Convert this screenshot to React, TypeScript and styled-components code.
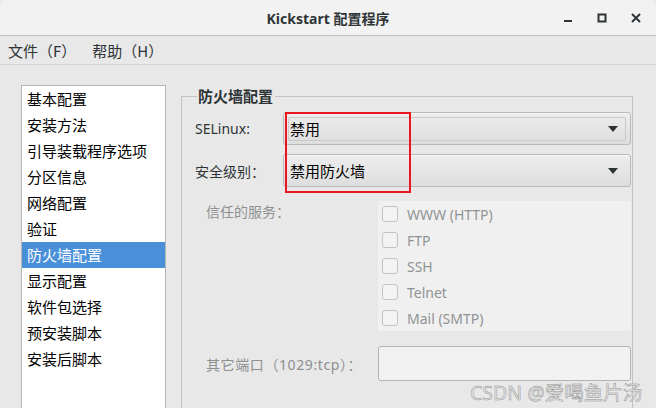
import React, { useState } from 'react';
import styled, { createGlobalStyle } from 'styled-components';

const GlobalStyle = createGlobalStyle`
  html, body {
    margin: 0;
    padding: 0;
    background: #e8e8e8;
  }
  body {
    font-family: 'Noto Sans', 'Noto Sans CJK SC', sans-serif;
  }
`;

const Window = styled.div`
  position: relative;
  width: 656px;
  height: 408px;
  overflow: hidden;
  display: flex;
  flex-direction: column;
  background: #e8e8e8;
  color: #2e3436;
`;

const TitleBar = styled.div`
  height: 35px;
  flex: none;
  display: grid;
  grid-template-columns: 1fr auto 1fr;
  align-items: center;
  background: #f2f2f2;
  border-bottom: 1px solid #bfbfbf;
  border-radius: 6px 6px 0 0;
`;

const Title = styled.div`
  grid-column: 2;
  font-family: 'Noto Sans', 'Noto Sans CJK SC', sans-serif;
  font-weight: bold;
  font-size: 14px;
  color: #2e3436;
  padding-top: 1px;
`;

const Controls = styled.div`
  grid-column: 3;
  justify-self: end;
  display: flex;
  align-items: center;
  gap: 18px;
  padding-right: 12px;
`;

const ControlBtn = styled.div`
  width: 16px;
  height: 16px;
  display: flex;
  align-items: center;
  justify-content: center;
`;

const MenuBar = styled.div`
  height: 28px;
  flex: none;
  display: flex;
  align-items: center;
  gap: 16px;
  padding-left: 8px;
  border-bottom: 1px solid #d6d6d6;
  font-size: 15px;
  color: #2e3436;
`;

const MenuItem = styled.span`
  font-family: 'Noto Sans CJK SC', sans-serif;
`;

const Body = styled.div`
  flex: 1;
  min-height: 0;
  display: flex;
  align-items: flex-start;
  padding: 20px 23px 0 21px;
`;

const NavList = styled.ul`
  list-style: none;
  margin: 0 0 -20px 0;
  padding: 0;
  width: 143px;
  align-self: stretch;
  background: #fff;
  border: 1px solid #b6b6b6;
  flex: none;
`;

const NavItem = styled.li<{ $active?: boolean }>`
  height: 26px;
  line-height: 25px;
  padding-left: 5px;
  font-family: 'Noto Sans CJK SC', sans-serif;
  font-size: 15px;
  color: ${p => (p.$active ? '#fff' : '#000')};
  background: ${p => (p.$active ? '#4a90d9' : 'transparent')};
`;

const Frame = styled.fieldset`
  flex: 1;
  min-width: 0;
  margin: 2px 0 0 15px;
  padding: 7px 1px 0 13px;
  border: 1px solid #c2c2c2;
  border-bottom: none;
  align-self: stretch;
`;

const Legend = styled.legend`
  padding: 0 2px 0 1px;
  margin-left: 2px;
  font-family: 'Noto Sans CJK SC', sans-serif;
  font-weight: bold;
  font-size: 15px;
  line-height: 18px;
  color: #2e3436;
`;

const ComboRows = styled.div`
  position: relative;
  display: flex;
  flex-direction: column;
  gap: 9px;
`;

const Row = styled.div`
  display: flex;
  align-items: center;
`;

const Label = styled.div<{ $width: number; $muted?: boolean }>`
  width: ${p => p.$width}px;
  flex: none;
  font-size: 14px;
  color: ${p => (p.$muted ? '#8d9091' : '#2e3436')};
`;

const Combo = styled.div`
  position: relative;
  flex: 1;
  height: 31px;
  display: flex;
  align-items: center;
  border: 1px solid #b9b9b9;
  border-radius: 3px;
  background: linear-gradient(#ededed, #dedede);
  box-shadow: inset 0 1px #f7f7f7;
  font-family: 'Noto Sans CJK SC', sans-serif;
  font-size: 15px;
  color: #000;
`;

const ComboInner = styled.div`
  position: absolute;
  left: 4px;
  right: 4px;
  top: 4px;
  bottom: 3px;
  border: 1px solid #cacaca;
  border-radius: 2px;
`;

const ComboText = styled.span`
  padding-left: 6px;
  flex: 1;
`;

const Arrow = styled.svg`
  margin-right: 12px;
`;

const Highlight = styled.div`
  position: absolute;
  left: 90px;
  top: 0;
  width: 122px;
  height: 77px;
  border: 2px solid #e8161e;
  pointer-events: none;
`;

const Section = styled.div<{ $top: number }>`
  display: flex;
  align-items: flex-start;
  margin: ${p => p.$top}px 0 0 11px;
`;

const ServiceBox = styled.div`
  flex: 1;
  height: 130px;
  background: #f0f0f0;
  padding: 0 0 0 4px;
  box-sizing: border-box;
  display: flex;
  flex-direction: column;
`;

const Service = styled.label`
  height: 26px;
  display: flex;
  align-items: center;
  gap: 9px;
  font-size: 14px;
  color: #909394;
`;

const CheckBox = styled.span`
  width: 14px;
  height: 14px;
  border: 1px solid #c3c3c3;
  border-radius: 3px;
  background: #f3f3f3;
  flex: none;
`;

const PortRow = styled(Section)`
  align-items: center;
`;

const PortLabel = styled(Label)`
  letter-spacing: 0.6px;
`;

const Entry = styled.div`
  flex: 1;
  height: 33px;
  border: 1px solid #b4b4b4;
  border-radius: 3px;
  background: #f2f2f2;
`;

const Watermark = styled.div`
  position: absolute;
  left: 470px;
  top: 377px;
  font-family: 'Noto Sans', 'Noto Sans CJK SC', sans-serif;
  font-size: 19.5px;
  color: #ececec;
  -webkit-text-stroke: 0.5px #8f8f8f;
  pointer-events: none;
`;

const navItems = [
  '基本配置',
  '安装方法',
  '引导装载程序选项',
  '分区信息',
  '网络配置',
  '验证',
  '防火墙配置',
  '显示配置',
  '软件包选择',
  '预安装脚本',
  '安装后脚本',
];

const services = ['WWW (HTTP)', 'FTP', 'SSH', 'Telnet', 'Mail (SMTP)'];

const DownArrow = () => (
  <Arrow width="10" height="6" viewBox="0 0 10 6">
    <polygon points="0,0 10,0 5,6" fill="#2e3436" />
  </Arrow>
);

export default function App() {
  const [active, setActive] = useState(6);
  return (
    <>
      <GlobalStyle />
      <Window>
        <TitleBar>
          <Title>Kickstart 配置程序</Title>
          <Controls>
            <ControlBtn>
              <svg width="10" height="10" viewBox="0 0 10 10">
                <rect x="1" y="7" width="8" height="2" fill="#2e3436" />
              </svg>
            </ControlBtn>
            <ControlBtn>
              <svg width="10" height="10" viewBox="0 0 10 10">
                <rect x="1.5" y="1.5" width="7" height="7" fill="none" stroke="#2e3436" strokeWidth="2" />
              </svg>
            </ControlBtn>
            <ControlBtn>
              <svg width="10" height="10" viewBox="0 0 10 10">
                <path d="M1 1 L9 9 M9 1 L1 9" stroke="#2e3436" strokeWidth="2" />
              </svg>
            </ControlBtn>
          </Controls>
        </TitleBar>
        <MenuBar>
          <MenuItem>文件（F）</MenuItem>
          <MenuItem>帮助（H）</MenuItem>
        </MenuBar>
        <Body>
          <NavList>
            {navItems.map((item, i) => (
              <NavItem key={item} $active={i === active} onClick={() => setActive(i)}>
                {item}
              </NavItem>
            ))}
          </NavList>
          <Frame>
            <Legend>防火墙配置</Legend>
            <ComboRows>
              <Row>
                <Label $width={88}>SELinux:</Label>
                <Combo>
                  <ComboInner />
                  <ComboText>禁用</ComboText>
                  <DownArrow />
                </Combo>
              </Row>
              <Row>
                <Label $width={88}>安全级别：</Label>
                <Combo>
                  <ComboText>禁用防火墙</ComboText>
                  <DownArrow />
                </Combo>
              </Row>
              <Highlight />
            </ComboRows>
            <Section $top={14}>
              <Label $width={172} $muted>信任的服务：</Label>
              <ServiceBox>
                {services.map(s => (
                  <Service key={s}>
                    <CheckBox />
                    {s}
                  </Service>
                ))}
              </ServiceBox>
            </Section>
            <PortRow $top={15}>
              <PortLabel $width={172} $muted>其它端口（1029:tcp）：</PortLabel>
              <Entry />
            </PortRow>
          </Frame>
        </Body>
        <Watermark>CSDN @爱喝鱼片汤</Watermark>
      </Window>
    </>
  );
}
